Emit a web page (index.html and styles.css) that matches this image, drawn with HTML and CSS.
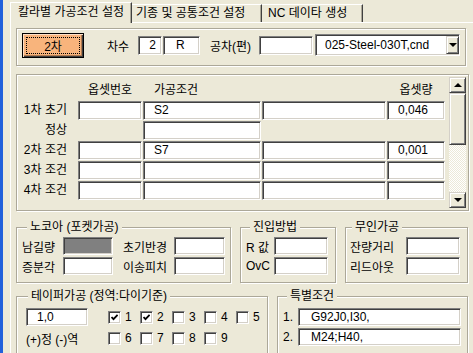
FILE: index.html
```html
<!DOCTYPE html>
<html lang="ko">
<head>
    <meta charset="UTF-8">
    <title>칼라별 가공조건 설정</title>
    <link rel="stylesheet" href="styles.css">
</head>
<body>
    <div class="window">
        <div class="tabs">
            <div class="tab active">칼라별 가공조건 설정</div>
            <div class="tab tab-common">기종 및 공통조건 설정</div>
            <div class="tab tab-nc">NC 데이타 생성</div>
        </div>

        <div class="panel">
            <!-- 차수 / 공차 -->
            <div class="group top-group">
                <button class="order-btn"><span class="focus">2차</span></button>
                <span class="lbl lbl-order">차수</span>
                <div class="field f-order">2</div>
                <div class="field f-side">R</div>
                <span class="lbl lbl-tol">공차(편)</span>
                <div class="field f-tol"></div>
                <div class="field combo">
                    <span>025-Steel-030T,cnd</span>
                    <span class="drop"><span class="arrow-down"></span></span>
                </div>
            </div>

            <!-- 가공조건 표 -->
            <div class="group table-group">
                <div class="cond-grid">
                    <div></div>
                    <div class="head head-center">옵셋번호</div>
                    <div class="head">가공조건</div>
                    <div></div>
                    <div class="head head-center">옵셋량</div>

                    <div class="row-lbl">1차 초기</div>
                    <div class="field"></div>
                    <div class="field">S2</div>
                    <div class="field"></div>
                    <div class="field">0,046</div>

                    <div class="row-lbl">정상</div>
                    <div></div>
                    <div class="field"></div>
                    <div></div>
                    <div></div>

                    <div class="row-lbl">2차 조건</div>
                    <div class="field"></div>
                    <div class="field">S7</div>
                    <div class="field"></div>
                    <div class="field">0,001</div>

                    <div class="row-lbl">3차 조건</div>
                    <div class="field"></div>
                    <div class="field"></div>
                    <div class="field"></div>
                    <div class="field"></div>

                    <div class="row-lbl">4차 조건</div>
                    <div class="field"></div>
                    <div class="field"></div>
                    <div class="field"></div>
                    <div class="field"></div>
                </div>
                <div class="scrollbar">
                    <div class="sb-btn"><span class="arrow-up"></span></div>
                    <div class="sb-thumb"></div>
                    <div class="sb-track"></div>
                    <div class="sb-btn"><span class="arrow-down"></span></div>
                </div>
            </div>

            <div class="group-row row-mid">
                <div class="group noco">
                    <span class="legend">노코아 (포켓가공)</span>
                    <div class="form-grid noco-grid">
                        <span>남길량</span>
                        <div class="field small gray"></div>
                        <span class="pad-left">초기반경</span>
                        <div class="field small"></div>
                        <span>증분각</span>
                        <div class="field small"></div>
                        <span class="pad-left">이송피치</span>
                        <div class="field small"></div>
                    </div>
                </div>
                <div class="group entry">
                    <span class="legend">진입방법</span>
                    <div class="form-grid entry-grid">
                        <span>R 값</span>
                        <div class="field small"></div>
                        <span>OvC</span>
                        <div class="field small"></div>
                    </div>
                </div>
                <div class="group unmanned">
                    <span class="legend">무인가공</span>
                    <div class="form-grid unmanned-grid">
                        <span>잔량거리</span>
                        <div class="field small"></div>
                        <span>리드아웃</span>
                        <div class="field small"></div>
                    </div>
                </div>
            </div>

            <div class="group-row row-low">
                <div class="group taper">
                    <span class="legend">테이퍼가공 (정역:다이기준)</span>
                    <div class="form-grid taper-grid">
                        <div class="field small">1,0</div>
                        <div class="checks">
                            <label class="opt"><span class="chk"><svg width="7" height="7" viewBox="0 0 7 7"><path d="M0.5 3 L2.5 5.2 L6.6 0.8" fill="none" stroke="#000" stroke-width="1.8"/></svg></span>1</label>
                            <label class="opt"><span class="chk"><svg width="7" height="7" viewBox="0 0 7 7"><path d="M0.5 3 L2.5 5.2 L6.6 0.8" fill="none" stroke="#000" stroke-width="1.8"/></svg></span>2</label>
                            <label class="opt"><span class="chk"></span>3</label>
                            <label class="opt"><span class="chk"></span>4</label>
                            <label class="opt"><span class="chk"></span>5</label>
                        </div>
                        <span>(+)정 (-)역</span>
                        <div class="checks">
                            <label class="opt"><span class="chk"></span>6</label>
                            <label class="opt"><span class="chk"></span>7</label>
                            <label class="opt"><span class="chk"></span>8</label>
                            <label class="opt"><span class="chk"></span>9</label>
                        </div>
                    </div>
                </div>
                <div class="group special">
                    <span class="legend">특별조건</span>
                    <div class="form-grid special-grid">
                        <span>1.</span>
                        <div class="field small">G92J0,I30,</div>
                        <span>2.</span>
                        <div class="field small">M24;H40,</div>
                    </div>
                </div>
            </div>
        </div>
    </div>
</body>
</html>
```

FILE: styles.css
```css
body {
    margin: 0;
    background-color: #ece9d8;
    font-family: "Liberation Sans", "Noto Sans CJK KR", sans-serif;
    font-size: 12px;
    color: #000;
    overflow: hidden;
}
.window {
    height: 353px;
    box-sizing: border-box;
    border-left: 3px solid #2160db;
    padding: 2px 0 0 7px;
}

/* tabs */
.tabs {
    display: flex;
    align-items: flex-end;
    height: 20px;
}
.tab {
    height: 18px;
    box-sizing: border-box;
    padding: 0 5px;
    border-top: 1px solid #fff;
    border-right: 1px solid #404040;
    box-shadow: inset -1px 0 #aca899;
    line-height: 16px;
    white-space: nowrap;
}
.tab.active {
    position: relative;
    z-index: 1;
    height: 21px;
    margin-bottom: -1px;
    padding: 0 7px;
    border-left: 1px solid #fff;
    background-color: #ece9d8;
    line-height: 19px;
}
.tab-common {
    width: 130px;
    padding: 0 0 0 4px;
}
.tab-nc {
    width: 101px;
    padding: 0 0 0 6px;
}
.panel {
    border-top: 1px solid #fff;
    border-left: 1px solid #fff;
    padding: 5px 0 0 5px;
}

/* group boxes */
.group {
    position: relative;
    box-sizing: border-box;
    border: 1px solid #aca899;
    box-shadow: inset 1px 1px #fff, 1px 1px #fff;
}
.legend {
    position: absolute;
    top: -8px;
    left: 10px;
    padding: 0 3px;
    background-color: #ece9d8;
    line-height: 14px;
    white-space: nowrap;
}
.group-row {
    display: flex;
    gap: 9px;
}

/* sunken text fields */
.field {
    height: 19px;
    box-sizing: border-box;
    background-color: #fff;
    border: 1px solid;
    border-color: #808080 #fff #fff #808080;
    box-shadow: inset 1px 1px #404040, inset -1px -1px #d4d0c8;
    padding-left: 10px;
    line-height: 17px;
    white-space: nowrap;
}
.field.small {
    height: 18px;
    line-height: 16px;
}
.field.gray {
    background-color: #808080;
}

/* top row */
.top-group {
    width: 450px;
    height: 38px;
    display: flex;
    align-items: center;
    padding: 0 0 4px 5px;
}
.order-btn {
    width: 62px;
    height: 25px;
    box-sizing: border-box;
    display: flex;
    padding: 3px;
    border: 1px solid #000;
    background-color: #f8b47c;
    box-shadow: inset 1px 1px #fde0c8, inset -1px -1px #404040, inset -2px -2px #b07a50;
    font: inherit;
    color: #000;
}
.focus {
    flex: 1;
    display: flex;
    align-items: center;
    justify-content: center;
    border: 1px dotted #000;
}
.lbl-order {
    width: 31px;
    margin-left: 23px;
}
.f-order {
    width: 24px;
    padding: 0 5px 0 0;
    text-align: right;
}
.f-side {
    width: 37px;
    margin-left: 1px;
    padding-left: 12px;
}
.lbl-tol {
    width: 49px;
    margin-left: 10px;
}
.f-tol {
    width: 54px;
}
.combo {
    width: 145px;
    height: 22px;
    margin-left: 2px;
    display: flex;
    align-items: center;
    padding-left: 9px;
}
.drop {
    margin-left: auto;
    width: 13px;
    height: 18px;
    box-sizing: border-box;
    display: flex;
    align-items: center;
    justify-content: center;
    background-color: #ece9d8;
    border: 1px solid;
    border-color: #d4d0c8 #404040 #404040 #d4d0c8;
    box-shadow: inset 1px 1px #fff, inset -1px -1px #808080;
}
.arrow-down {
    width: 0;
    height: 0;
    border-left: 4px solid transparent;
    border-right: 4px solid transparent;
    border-top: 4px solid #000;
}
.arrow-up {
    width: 0;
    height: 0;
    border-left: 4px solid transparent;
    border-right: 4px solid transparent;
    border-bottom: 4px solid #000;
}

/* condition table */
.table-group {
    width: 453px;
    height: 137px;
    margin-top: 8px;
    display: flex;
    align-items: flex-start;
}
.cond-grid {
    display: grid;
    grid-template-columns: 60px 64px 118px 124px 58px;
    grid-auto-rows: 19px;
    gap: 1px;
    margin-top: 6px;
}
.head {
    line-height: 19px;
    padding-left: 11px;
}
.head-center {
    padding-left: 0;
    text-align: center;
}
.row-lbl {
    line-height: 19px;
    text-align: right;
    padding-right: 10px;
    white-space: nowrap;
}
.scrollbar {
    width: 17px;
    height: 131px;
    margin: 2px 0 0 4px;
    display: flex;
    flex-direction: column;
}
.sb-btn, .sb-thumb {
    box-sizing: border-box;
    background-color: #ece9d8;
    border: 1px solid;
    border-color: #d4d0c8 #404040 #404040 #d4d0c8;
    box-shadow: inset 1px 1px #fff, inset -1px -1px #808080;
}
.sb-btn {
    height: 16px;
    display: flex;
    align-items: center;
    justify-content: center;
}
.sb-thumb {
    height: 52px;
}
.sb-track {
    flex: 1;
    background: repeating-conic-gradient(#fff 0 25%, #ece9d8 0 50%) 0 0 / 2px 2px;
}

/* lower groups */
.row-mid {
    margin-top: 16px;
}
.row-mid .group {
    height: 56px;
}
.row-low {
    margin-top: 13px;
}
.row-low .group {
    height: 70px;
}
.form-grid {
    display: grid;
    grid-auto-rows: 18px;
    row-gap: 2px;
    align-items: center;
    white-space: nowrap;
}
.noco {
    width: 215px;
}
.noco-grid {
    grid-template-columns: 41px 50px 61px 51px;
    padding: 9px 0 0 5px;
}
.pad-left {
    padding-left: 10px;
}
.entry {
    width: 96px;
}
.entry .legend {
    left: 9px;
}
.entry-grid {
    grid-template-columns: 28px 54px;
    padding: 9px 0 0 5px;
}
.unmanned {
    width: 123px;
}
.unmanned .legend {
    left: 6px;
}
.unmanned-grid {
    grid-template-columns: 56px 54px;
    padding: 9px 0 0 4px;
}
.taper {
    width: 252px;
}
.taper .legend {
    left: 11px;
}
.taper-grid {
    grid-template-columns: 62px auto;
    row-gap: 3px;
    padding: 11px 0 0 9px;
}
.checks {
    display: flex;
    margin-left: 20px;
}
.opt {
    width: 32px;
    display: flex;
    align-items: center;
    gap: 4px;
}
.chk {
    width: 13px;
    height: 13px;
    box-sizing: border-box;
    display: flex;
    align-items: center;
    justify-content: center;
    background-color: #fff;
    border: 1px solid;
    border-color: #808080 #fff #fff #808080;
    box-shadow: inset 1px 1px #404040, inset -1px -1px #d4d0c8;
}
.special {
    width: 191px;
}
.special .legend {
    left: 9px;
}
.special-grid {
    grid-template-columns: 15px 163px;
    padding: 11px 0 0 5px;
}
.special-grid .field {
    padding-left: 12px;
}
```
